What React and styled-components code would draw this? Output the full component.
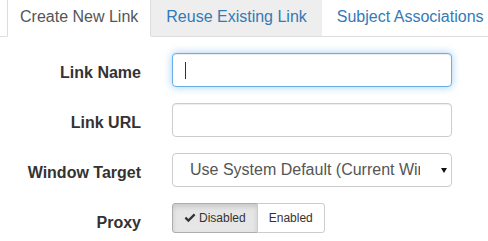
import React from "react";
import styled, { createGlobalStyle } from "styled-components";

const Global = createGlobalStyle`
  html, body { margin: 0; padding: 0; background: #fff; }
  body {
    font-family: "Liberation Sans", Arial, Helvetica, sans-serif;
    font-size: 16px;
    color: #333;
    overflow: hidden;
  }
  * { box-sizing: border-box; }
`;

const Page = styled.div`
  width: 488px;
  height: 241px;
  overflow: hidden;
`;

const TabBar = styled.ul`
  display: flex;
  margin: 0;
  padding: 0 0 0 7px;
  list-style: none;
  border-bottom: 1px solid #ddd;
  white-space: nowrap;
`;

const Tab = styled.li`
  flex: none;
  margin-bottom: -1px;
  padding: 6px ${(p) => (p.$active ? "12px" : "14px")} 8px;
  line-height: 22px;
  border: 1px solid transparent;
  border-top: 0;
  cursor: pointer;
  color: ${(p) => (p.$active ? "#555" : "#337ab7")};
  background: ${(p) => (p.$active ? "#fff" : p.$hover ? "#eee" : "transparent")};
  border-color: ${(p) =>
    p.$active ? "#ddd #ddd transparent" : p.$hover ? "#eee #eee #ddd" : "transparent"};
`;

const Form = styled.div`
  display: grid;
  grid-template-columns: 141px 280px;
  column-gap: 31px;
  row-gap: 16px;
  margin-top: 16px;
  align-items: start;
`;

const Label = styled.label`
  text-align: right;
  font-weight: bold;
  color: #333;
  padding-top: 8px;
  line-height: 24px;
  white-space: nowrap;
`;

const TextBox = styled.div`
  display: flex;
  align-items: center;
  height: 34px;
  padding: 0 12px;
  background: #fff;
  border: 1px solid ${(p) => (p.$focus ? "#66afe9" : "#ccc")};
  border-radius: 4px;
  box-shadow: ${(p) =>
    p.$focus
      ? "inset 0 1px 1px rgba(0,0,0,.075), 0 0 8px rgba(102,175,233,.6)"
      : "inset 0 1px 1px rgba(0,0,0,.075)"};
`;

const Caret = styled.span`
  display: block;
  width: 1px;
  height: 17px;
  background: #333;
`;

const Select = styled.div`
  display: flex;
  align-items: center;
  height: 34px;
  padding: 0 4px 0 17px;
  background: #fff;
  border: 1px solid #ccc;
  border-radius: 4px;
  color: #555;
  gap: 21px;
`;

const SelectText = styled.span`
  flex: 1;
  overflow: hidden;
  white-space: nowrap;
  line-height: 20px;
`;

const Arrow = styled.svg`
  flex: none;
  width: 6px;
  height: 5px;
  display: block;
`;

const BtnGroup = styled.div`
  display: inline-flex;
  justify-self: start;
`;

const Btn = styled.button`
  display: inline-flex;
  align-items: center;
  height: 30px;
  padding: 0 11px;
  font-family: inherit;
  font-size: 12px;
  line-height: 18px;
  color: #333;
  background: ${(p) => (p.$active ? "#e6e6e6" : "#fff")};
  border: 1px solid ${(p) => (p.$active ? "#adadad" : "#ccc")};
  box-shadow: ${(p) => (p.$active ? "inset 0 3px 5px rgba(0,0,0,.125)" : "none")};
  & + & { margin-left: -1px; }
  &:first-child { border-radius: 3px 0 0 3px; }
  &:last-child { border-radius: 0 3px 3px 0; }
`;

const Check = styled.svg`
  width: 12px;
  height: 10px;
  margin-right: 3px;
  display: block;
`;

export default function App() {
  return (
    <Page>
      <Global />
      <TabBar>
        <Tab $active>Create New Link</Tab>
        <Tab $hover>Reuse Existing Link</Tab>
        <Tab>Subject Associations</Tab>
      </TabBar>
      <Form>
        <Label>Link Name</Label>
        <TextBox $focus>
          <Caret />
        </TextBox>

        <Label>Link URL</Label>
        <TextBox />

        <Label>Window Target</Label>
        <Select>
          <SelectText>Use System Default (Current Window)</SelectText>
          <Arrow viewBox="0 0 6 5">
            <path d="M0 0 H6 L3 5 Z" fill="#111" />
          </Arrow>
        </Select>

        <Label>Proxy</Label>
        <BtnGroup>
          <Btn $active>
            <Check viewBox="0 0 12 10">
              <path
                d="M0.6 5.4 L2.2 3.8 L4.4 6 L9.8 0.6 L11.4 2.2 L4.4 9.2 Z"
                fill="#333"
              />
            </Check>
            Disabled
          </Btn>
          <Btn>Enabled</Btn>
        </BtnGroup>
      </Form>
    </Page>
  );
}
